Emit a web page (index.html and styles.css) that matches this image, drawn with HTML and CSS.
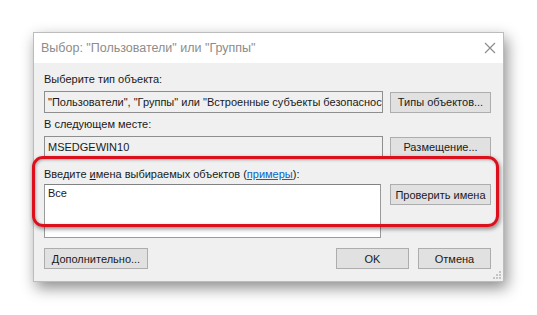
FILE: index.html
```html
<!DOCTYPE html>
<html lang="ru">
<head>
    <meta charset="UTF-8">
    <title>Выбор: "Пользователи" или "Группы"</title>
    <link rel="stylesheet" href="styles.css">
</head>
<body>
    <div class="dialog">
        <div class="title-bar">
            <span class="title">Выбор: "Пользователи" или "Группы"</span>
            <svg class="close" width="12" height="12" viewBox="0 0 12 12">
                <path d="M1 1 L11 11 M11 1 L1 11" stroke="#8a8a8a" stroke-width="1.1" fill="none"/>
            </svg>
        </div>

        <div class="content">
            <div class="label">Выберите тип объекта:</div>
            <div class="row">
                <div class="field">"Пользователи", "Группы" или "Встроенные субъекты безопасности"</div>
                <button class="btn">Типы объектов...</button>
            </div>

            <div class="label">В следующем месте:</div>
            <div class="row">
                <div class="field">MSEDGEWIN10</div>
                <button class="btn">Размещение...</button>
            </div>

            <div class="label label-names">Введите <u>и</u>мена выбираемых объектов (<a href="#">примеры</a>):</div>
            <div class="row row-names">
                <div class="names">Все</div>
                <button class="btn">Проверить имена</button>
            </div>

            <div class="footer">
                <button class="btn btn-more">Дополнительно...</button>
                <div class="actions">
                    <button class="btn btn-ok">OK</button>
                    <button class="btn btn-ok">Отмена</button>
                </div>
            </div>
        </div>

        <svg class="grip" width="9" height="9" viewBox="0 0 9 9">
            <rect x="7" y="1" width="2" height="2" fill="#c4c4c4"/>
            <rect x="4" y="4" width="2" height="2" fill="#c4c4c4"/>
            <rect x="7" y="4" width="2" height="2" fill="#c4c4c4"/>
            <rect x="1" y="7" width="2" height="2" fill="#c4c4c4"/>
            <rect x="4" y="7" width="2" height="2" fill="#c4c4c4"/>
            <rect x="7" y="7" width="2" height="2" fill="#c4c4c4"/>
        </svg>
    </div>

    <div class="highlight"></div>
</body>
</html>
```

FILE: styles.css
```css
* {
    margin: 0;
    padding: 0;
    box-sizing: border-box;
}

body {
    width: 537px;
    height: 315px;
    background-color: white;
    font-family: "Liberation Sans", Arial, sans-serif;
    font-size: 11px;
    color: #1a1a1a;
    overflow: hidden;
    position: relative;
}

.dialog {
    position: relative;
    margin: 32px 0 0 33px;
    width: 471px;
    height: 250px;
    background-color: #f0f0f0;
    border: 1px solid #bcbcbc;
    box-shadow: 3px 6px 14px rgba(0, 0, 0, 0.45);
}

.title-bar {
    height: 30px;
    background-color: white;
    display: flex;
    align-items: center;
    justify-content: space-between;
    padding: 0 7px 0 7px;
}

.title {
    font-size: 12.5px;
    color: #8c8c8c;
}

.content {
    padding: 9px 12px 0 10px;
}

.label {
    height: 19px;
    line-height: 15px;
}

.label a {
    color: #0a64c8;
}

.row {
    display: flex;
    justify-content: space-between;
    align-items: center;
    margin-bottom: 4px;
}

.field {
    width: 339px;
    height: 22px;
    line-height: 20px;
    padding: 0 3px;
    border: 1px solid #8e8e8e;
    background-color: #f0f0f0;
    white-space: nowrap;
    overflow: hidden;
}

.btn {
    font-family: inherit;
    font-size: 11px;
    color: #1a1a1a;
    width: 101px;
    height: 21px;
    background-color: #e1e1e1;
    border: 1px solid #adadad;
}

.label-names {
    height: 17px;
    margin-top: 9px;
}

.row-names {
    align-items: flex-start;
}

.names {
    width: 337px;
    height: 54px;
    padding: 2px 3px;
    background-color: white;
    border: 1px solid #9a9a9a;
    border-top-color: #828282;
}

.footer {
    display: flex;
    justify-content: space-between;
    margin-top: 10px;
}

.btn-more {
    width: 104px;
}

.actions {
    display: flex;
    gap: 9px;
}

.btn-ok {
    width: 73px;
}

.grip {
    position: absolute;
    right: 2px;
    bottom: 2px;
}

.highlight {
    position: absolute;
    left: 32px;
    top: 156px;
    width: 467px;
    height: 71px;
    border: 3px solid #dc0f1c;
    border-radius: 11px;
    box-shadow: 1px 2px 4px rgba(0, 0, 0, 0.45), inset 1px 1px 3px rgba(0, 0, 0, 0.3);
}
```
